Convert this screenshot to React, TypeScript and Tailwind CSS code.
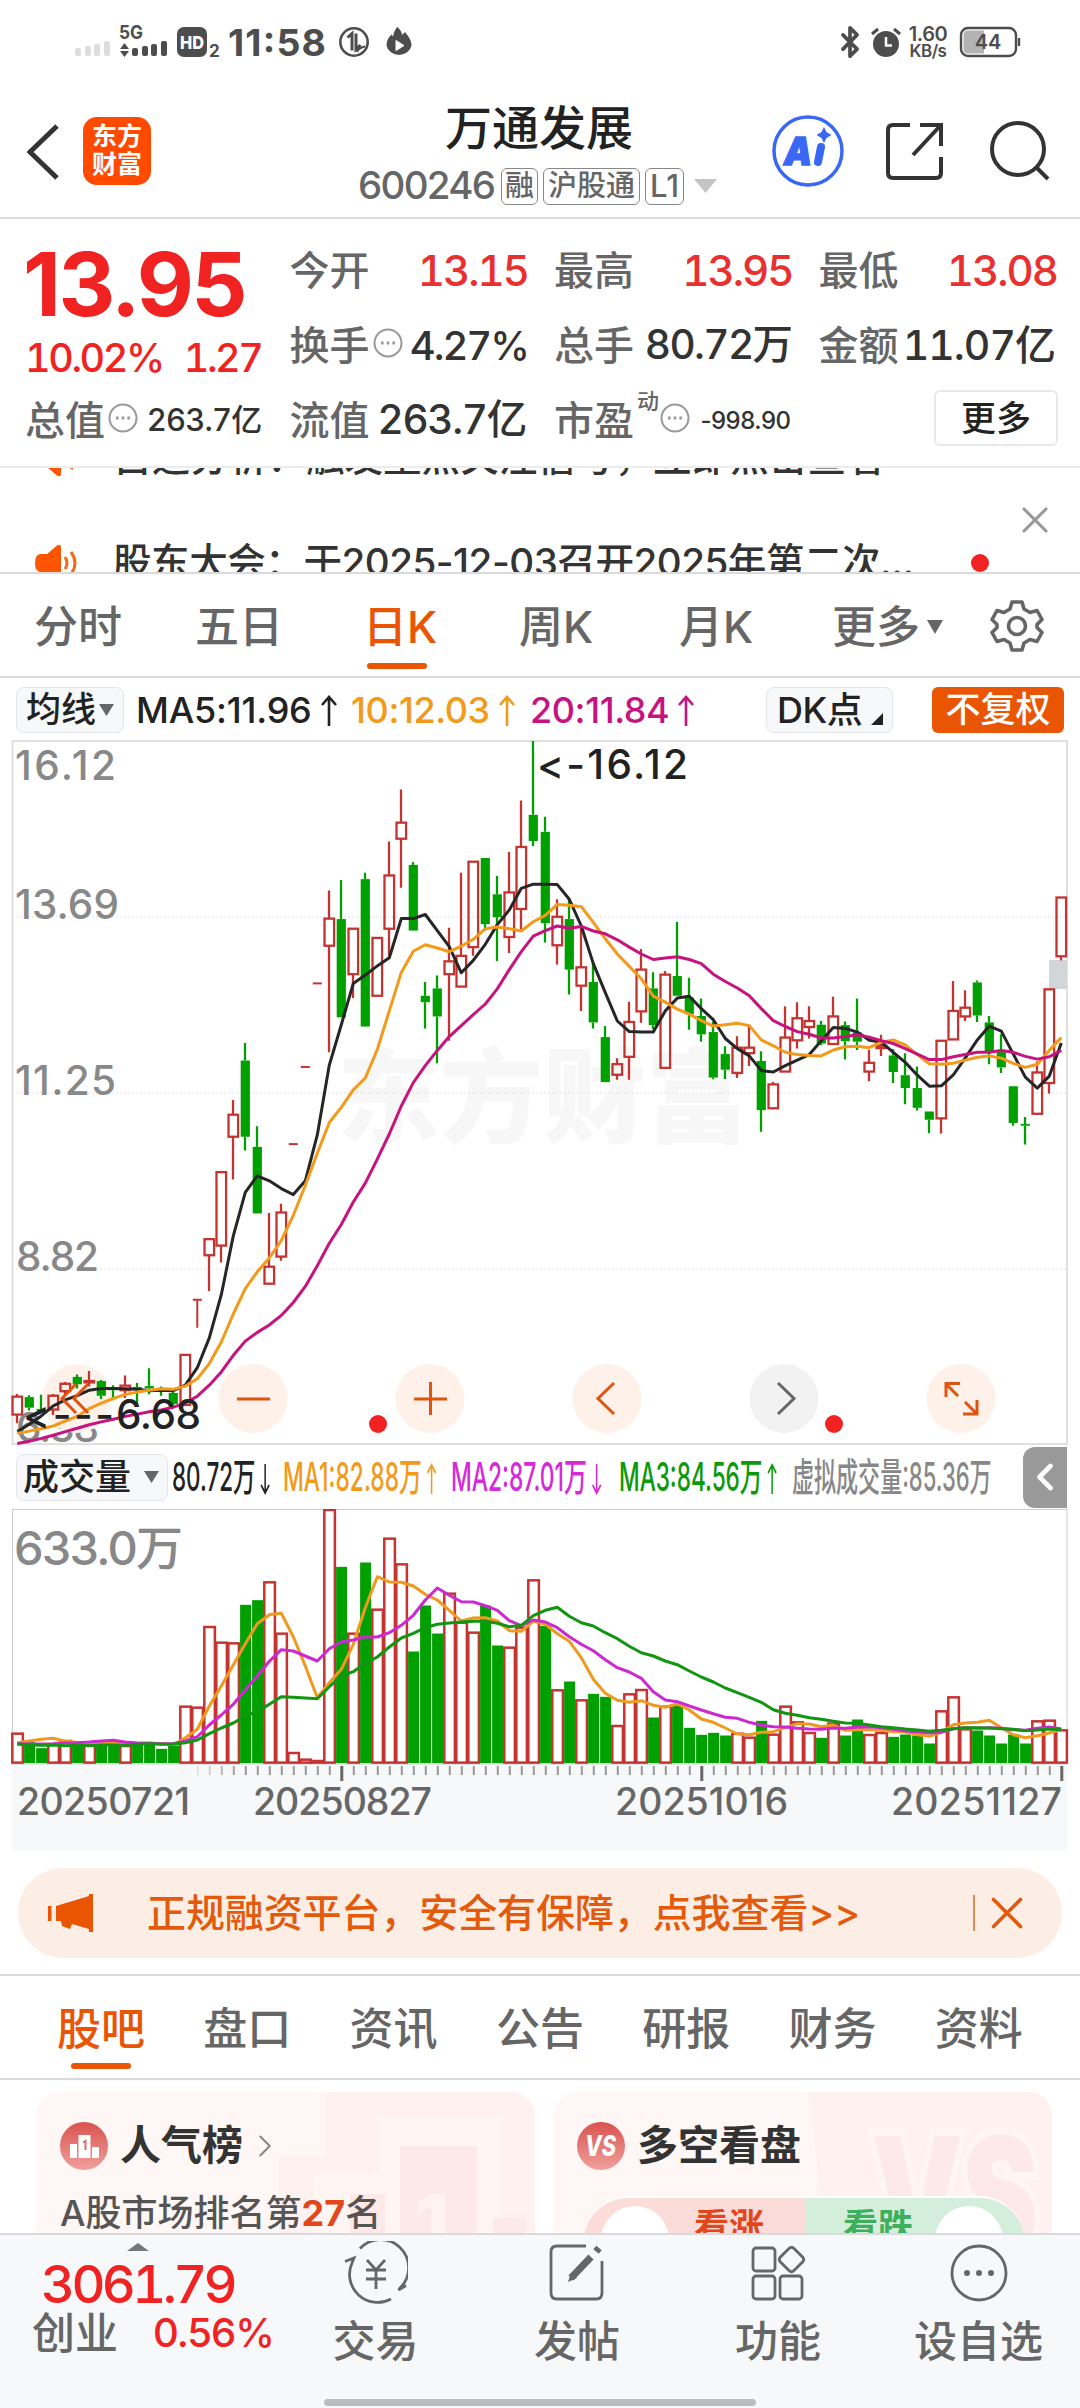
import React from 'react';
import { Bluetooth, ChevronLeft, ChevronRight, X } from 'lucide-react';

type Candle = [kind: 'r' | 'g', open: number, close: number, high: number, low: number];

// open/close/high/low in plot units, measured down from the top of the chart
const PRICE_SCALE = 0.4592;
const STEP = 12;

const candles: Candle[] = [
  ['r', 1430, 1469, 1424, 1488], ['g', 1431, 1454, 1427, 1460], ['g', 1457, 1461, 1426, 1462], ['r', 1428, 1458, 1424, 1470],
  ['r', 1402, 1418, 1398, 1425], ['g', 1387, 1403, 1382, 1412], ['r', 1396, 1399, 1374, 1408], ['g', 1396, 1428, 1394, 1435],
  ['g', 1412, 1416, 1405, 1438], ['r', 1406, 1416, 1384, 1433], ['g', 1409, 1414, 1400, 1448], ['g', 1407, 1412, 1368, 1425],
  ['g', 1411, 1415, 1408, 1428], ['g', 1422, 1446, 1420, 1448], ['r', 1339, 1448, 1339, 1448], ['r', 1219, 1219, 1219, 1280],
  ['r', 1087, 1122, 1087, 1200], ['r', 941, 1101, 941, 1138], ['r', 816, 864, 784, 957], ['g', 698, 864, 660, 894],
  ['g', 886, 1031, 841, 1031], ['r', 1147, 1184, 1030, 1184], ['r', 1029, 1125, 1010, 1134], ['r', 880, 880, 880, 880],
  ['r', 712, 712, 712, 712], ['r', 530, 530, 530, 530], ['r', 389, 448, 328, 680], ['g', 390, 604, 305, 604],
  ['r', 411, 510, 411, 562], ['g', 303, 624, 289, 624], ['r', 431, 557, 431, 557], ['r', 295, 411, 221, 470],
  ['r', 180, 215, 108, 322], ['g', 272, 415, 266, 415], ['g', 557, 571, 527, 628], ['g', 541, 602, 513, 704],
  ['r', 482, 510, 409, 655], ['r', 470, 537, 289, 537], ['r', 265, 451, 265, 470], ['g', 257, 401, 257, 415],
  ['g', 336, 386, 296, 481], ['r', 332, 429, 244, 464], ['r', 233, 368, 132, 412], ['g', 163, 220, 2, 231],
  ['g', 200, 399, 167, 441], ['r', 385, 447, 347, 489], ['g', 390, 500, 347, 554], ['r', 495, 535, 405, 590],
  ['g', 527, 615, 484, 628], ['g', 647, 745, 623, 745], ['r', 706, 729, 693, 740], ['r', 614, 690, 570, 740],
  ['r', 500, 591, 455, 616], ['g', 541, 621, 506, 630], ['r', 511, 714, 503, 714], ['g', 514, 557, 396, 557],
  ['g', 561, 597, 518, 631], ['g', 601, 641, 563, 657], ['g', 636, 735, 613, 739], ['g', 684, 718, 667, 738],
  ['r', 670, 725, 645, 736], ['r', 670, 682, 620, 710], ['g', 699, 806, 678, 853], ['r', 750, 802, 745, 804],
  ['r', 648, 722, 580, 722], ['r', 606, 654, 571, 672], ['r', 612, 625, 580, 650], ['g', 620, 661, 612, 664],
  ['r', 602, 662, 559, 662], ['g', 621, 656, 613, 696], ['g', 637, 657, 563, 675], ['r', 703, 722, 675, 743],
  ['r', 666, 671, 642, 688], ['g', 687, 723, 673, 747], ['g', 730, 758, 682, 793], ['g', 758, 801, 711, 807],
  ['g', 809, 827, 809, 856], ['r', 655, 824, 655, 857], ['r', 590, 652, 525, 652], ['r', 583, 602, 545, 612],
  ['g', 528, 600, 524, 614], ['g', 615, 678, 601, 706], ['g', 676, 713, 641, 725], ['g', 754, 834, 754, 840],
  ['g', 836, 840, 821, 881], ['r', 724, 814, 700, 816], ['r', 543, 747, 543, 770], ['r', 343, 471, 343, 480],
];

const ma5 = [
  1506, 1490, 1472, 1450, 1437, 1428, 1416, 1412, 1412, 1413, 1414, 1417, 1416, 1417, 1405, 1367, 1302, 1208, 1080, 985, 949, 960,
  977, 990, 960, 860, 708, 620, 530, 512, 492, 474, 389, 389, 380, 415, 450, 507, 480, 445, 402, 370, 323, 314, 314, 315, 347, 405,
  487, 550, 612, 635, 636, 636, 590, 562, 558, 585, 609, 650, 672, 688, 720, 723, 709, 697, 685, 655, 626, 628, 636, 654, 658, 680,
  702, 730, 754, 753, 729, 692, 653, 623, 634, 684, 734, 758, 732, 660,
];
const ma10 = [
  1510, 1505, 1500, 1494, 1483, 1473, 1456, 1444, 1434, 1425, 1420, 1416, 1413, 1414, 1407, 1391, 1358, 1311, 1250, 1195, 1158, 1128,
  1090, 1035, 970, 900, 833, 800, 762, 736, 674, 590, 506, 460, 446, 453, 461, 449, 434, 411, 407, 411, 416, 396, 382, 358, 360, 363,
  397, 433, 466, 493, 520, 558, 571, 586, 597, 611, 623, 620, 617, 622, 653, 666, 680, 685, 687, 688, 675, 668, 667, 670, 658, 653,
  664, 685, 705, 706, 704, 697, 691, 688, 693, 704, 713, 706, 676, 648,
];
const ma20 = [
  1532, 1527, 1521, 1514, 1506, 1499, 1491, 1485, 1479, 1473, 1468, 1463, 1459, 1453, 1444, 1429, 1405, 1376, 1340, 1309, 1290, 1274,
  1253, 1225, 1190, 1145, 1096, 1055, 1006, 965, 913, 858, 797, 746, 709, 676, 646, 622, 598, 575, 542, 500, 461, 427, 415, 405, 410,
  406, 416, 422, 435, 451, 466, 478, 475, 472, 478, 487, 510, 526, 540, 557, 585, 611, 624, 635, 641, 649, 649, 646, 642, 647, 655,
  661, 672, 684, 696, 696, 690, 685, 680, 680, 676, 680, 689, 695, 690, 676,
];

// same order as the candles, one third of a pixel per unit
const volumes = [
  878, 905, 923, 910, 900, 908, 912, 910, 912, 915, 907, 905, 925, 915, 797, 800, 558, 605, 607, 493, 479, 424, 578, 936, 956, 960,
  190, 379, 578, 366, 506, 293, 370, 633, 495, 579, 458, 545, 575, 495, 615, 620, 560, 418, 556, 748, 723, 778, 760, 769, 855, 760,
  747, 831, 797, 794, 862, 883, 877, 885, 878, 890, 841, 881, 797, 844, 876, 892, 848, 885, 837, 882, 876, 889, 882, 885, 909, 811,
  769, 865, 870, 885, 909, 882, 909, 841, 839, 868,
];
const volMa1 = [
  905, 900, 895, 892, 901, 904, 906, 907, 905, 907, 907, 906, 908, 911, 890, 865, 795, 735, 672, 608, 548, 521, 517, 587, 675, 770,
  725, 685, 610, 500, 407, 423, 424, 435, 460, 477, 508, 540, 531, 530, 540, 569, 571, 541, 550, 578, 601, 650, 715, 757, 778, 784,
  779, 793, 799, 789, 807, 834, 844, 861, 879, 881, 874, 872, 860, 848, 849, 857, 852, 868, 866, 866, 868, 872, 873, 881, 886, 874,
  851, 846, 844, 838, 860, 881, 890, 884, 876, 865,
];
const volMa2 = [
  908, 909, 909, 908, 906, 905, 903, 900, 898, 903, 906, 907, 908, 908, 900, 887, 852, 822, 790, 747, 705, 661, 626, 630, 645, 660,
  623, 603, 597, 587, 588, 575, 553, 523, 477, 441, 463, 482, 483, 494, 508, 539, 554, 537, 543, 560, 587, 610, 629, 656, 680, 693,
  712, 752, 777, 782, 795, 807, 818, 829, 832, 844, 853, 857, 858, 862, 864, 865, 861, 862, 858, 857, 860, 865, 870, 873, 876, 874,
  863, 860, 862, 860, 862, 866, 868, 862, 858, 864,
];
const volMa3 = [
  909, 912, 913, 912, 914, 913, 914, 912, 912, 913, 910, 908, 910, 909, 905, 897, 878, 861, 846, 825, 812, 790, 767, 769, 771, 773,
  737, 705, 692, 667, 648, 618, 591, 577, 560, 550, 546, 543, 541, 541, 547, 557, 553, 524, 508, 499, 526, 545, 555, 575, 593, 616,
  635, 645, 660, 671, 690, 708, 723, 741, 755, 769, 784, 806, 817, 823, 830, 835, 841, 846, 847, 852, 857, 860, 864, 867, 871, 868,
  863, 860, 860, 861, 863, 865, 869, 867, 864, 866,
];

const RED = '#c43431';
const GREEN = '#00a000';

const xAt = (i: number) => 17.3 + i * STEP;
const priceLine = (values: number[]) => values.map((v, i) => `${xAt(i)},${(v * PRICE_SCALE).toFixed(1)}`).join(' ');
const volLine = (values: number[]) => values.map((v, i) => `${xAt(i)},${((v - 204) / 3).toFixed(1)}`).join(' ');

const isRedVolume = (i: number) => candles[i][0] === 'r' || i === 43;

const PriceChart: React.FC = () => (
  <svg width="1080" height="705" viewBox="0 0 1080 705" className="block">
    <text x="337" y="395" fontSize="103" fontWeight="900" fill="#f7f7f7">东方财富</text>
    {[177, 353, 529].map((y) => (
      <line key={y} x1="12" x2="1067" y1={y} y2={y} stroke="#e0e0e0" strokeWidth="1" strokeDasharray="2 2" />
    ))}
    <rect x="12.5" y="1" width="1054.5" height="703" fill="none" stroke="#e0e0e0" strokeWidth="2" />
    <g fontSize="40.5" fill="#888" fontWeight="500">
      <text x="15" y="40" textLength="101">16.12</text>
      <text x="15" y="179" textLength="104">13.69</text>
      <text x="15" y="355" textLength="101">11.25</text>
      <text x="16" y="531" textLength="83">8.82</text>
      <text x="16" y="702" textLength="83">6.38</text>
    </g>
    <g fill="#fef1e9">
      <circle cx="77" cy="658.5" r="34.5" />
      <circle cx="253" cy="658.5" r="34.5" />
      <circle cx="430" cy="658.5" r="34.5" />
      <circle cx="607" cy="658.5" r="34.5" />
      <circle cx="784" cy="658.5" r="34.5" fill="#f2f2f2" />
      <circle cx="961" cy="658.5" r="34.5" />
    </g>
    <rect x="1049" y="220" width="18" height="29" fill="#d2d5da" />
    {candles.map(([kind, open, close, high, low], i) => {
      const x = xAt(i);
      const top = open * PRICE_SCALE;
      const h = (close - open) * PRICE_SCALE;
      if (open === close) {
        return <path key={i} d={`M${x - 4.5} ${top}h9M${x} ${top}V${low * PRICE_SCALE}`} stroke={RED} strokeWidth="2" fill="none" />;
      }
      const color = kind === 'r' ? RED : GREEN;
      return (
        <g key={i}>
          <path
            d={`M${x - 0.3} ${high * PRICE_SCALE}V${top}M${x - 0.3} ${top + h}V${low * PRICE_SCALE}`}
            stroke={color}
            strokeWidth="2.3"
          />
          {kind === 'r' ? (
            <rect x={x - 4.8} y={top} width="9.6" height={h} fill="none" stroke={color} strokeWidth="2.3" />
          ) : (
            <rect x={x - 4.6} y={top} width="9.2" height={Math.max(h, 1.5)} fill={color} />
          )}
        </g>
      );
    })}
    <g fill="none" strokeWidth="3" strokeLinejoin="round">
      <polyline points={priceLine(ma5)} stroke="#262626" />
      <polyline points={priceLine(ma10)} stroke="#f39a1a" />
      <polyline points={priceLine(ma20)} stroke="#c7137f" />
    </g>
    <g fontSize="40.5" fill="#222" fontWeight="500" className="[font-feature-settings:'calt'_0]">
      <text x="537" y="39" textLength="151">&lt;-16.12</text>
      <text x="23" y="689" textLength="91">&lt;---</text>
      <text x="116" y="689" textLength="85">6.68</text>
    </g>
    <g fill="none" stroke="#de5410" strokeWidth="3">
      <path d="M76 644L62 658.5L76 673M88 644L74 658.5L88 673" />
      <path d="M237 659H270" />
      <path d="M414 659H447M430.5 642V675" />
      <path d="M614 643L598 658.5L614 674" />
      <path d="M778 643L794 658.5L778 674" stroke="#666" />
      <path d="M946 657V643.5H960M947 645L958 656M977 660V674H963M976 673L965 662" />
    </g>
    <g fill="#f02222">
      <circle cx="378" cy="684" r="9" />
      <circle cx="834" cy="684" r="9" />
    </g>
  </svg>
);

const VolumeChart: React.FC = () => (
  <svg width="1080" height="341" viewBox="0 0 1080 341" className="block">
    <rect x="12" y="255" width="1055" height="86" fill="#f7f8fa" />
    <rect x="12.5" y="0.5" width="1054.5" height="254.5" fill="none" stroke="#ccc" strokeWidth="1" />
    <text x="14" y="55.5" fontSize="47" fontWeight="500" fill="#888" textLength="169">633.0万</text>
    {volumes.map((v, i) => {
      const top = Math.max((v - 204) / 3, 1);
      const x = xAt(i);
      return isRedVolume(i) ? (
        <rect key={i} x={x - 5} y={top} width="10.6" height={Math.max(253.6 - top, 1)} fill="#fff" stroke={RED} strokeWidth="2.5" />
      ) : (
        <rect key={i} x={x - 5.2} y={top - 0.5} width="11" height={254.5 - top} fill={GREEN} />
      );
    })}
    <g fill="none" strokeWidth="3" strokeLinejoin="round">
      <polyline points={volLine(volMa1)} stroke="#ef9a1f" />
      <polyline points={volLine(volMa2)} stroke="#cc2ad0" />
      <polyline points={volLine(volMa3)} stroke="#129612" />
    </g>
    {Array.from({ length: 73 }, (_, n) => n + 15).map((i) => {
      const major = i === 27 || i === 57 || i === 87;
      return (
        <line
          key={i}
          x1={xAt(i) + 0.5}
          x2={xAt(i) + 0.5}
          y1="257"
          y2={major ? 272 : 266}
          stroke={major ? '#666' : '#999'}
          strokeWidth={major ? 3 : 2}
          opacity={i < 19 ? (i - 14) * 0.22 : 1}
        />
      );
    })}
    <g fontSize="37.5" fill="#666" fontWeight="500">
      <text x="17" y="306" textLength="173">20250721</text>
      <text x="253" y="306" textLength="179">20250827</text>
      <text x="615" y="306" textLength="173">20251016</text>
      <text x="891" y="306" textLength="171">20251127</text>
    </g>
  </svg>
);

const Dots: React.FC = () => (
  <svg width="30" height="30" viewBox="0 0 30 30" fill="none" stroke="#999" strokeWidth="2" className="shrink-0">
    <circle cx="15" cy="15" r="13.5" />
    <path d="M8 15h2.6M13.7 15h2.6M19.4 15h2.6" strokeWidth="3" />
  </svg>
);

const StatusBar: React.FC = () => (
  <div className="h-[90px] flex items-start pt-[24px] text-[#4d4d4d]">
    <svg width="348" height="36" viewBox="0 0 348 36" className="ml-[72px] overflow-visible">
      <g fill="#ddd">
        <rect x="3" y="24" width="6" height="8" rx="2" />
        <rect x="13" y="22" width="6" height="10" rx="2" />
        <rect x="22" y="20" width="6" height="12" rx="2" />
        <rect x="32" y="17" width="6" height="15" rx="2" />
      </g>
      <text x="47" y="15" fontSize="19" fontWeight="700" fill="#4d4d4d" textLength="24" lengthAdjust="spacingAndGlyphs">5G</text>
      <g fill="#4d4d4d">
        <path d="M48 25l4.500-6 4.500 6zM48 27l4.500 6 4.500-6z" />
        <rect x="60" y="24" width="6" height="8" rx="2" />
        <rect x="70" y="22" width="6" height="10" rx="2" />
        <rect x="79" y="20" width="6" height="12" rx="2" />
        <rect x="89" y="17" width="6" height="15" rx="2" />
        <rect x="105" y="3" width="30" height="30" rx="7" />
      </g>
      <text x="108" y="24.5" fontSize="18" fontWeight="800" fill="#fff" textLength="24" lengthAdjust="spacingAndGlyphs">HD</text>
      <text x="137" y="32.5" fontSize="17" fontWeight="700" fill="#4d4d4d">2</text>
      <text x="156" y="32" fontSize="37.5" fontWeight="700" fill="#4d4d4d" textLength="98">11:58</text>
      <g fill="none" stroke="#4d4d4d" strokeWidth="2.6">
        <circle cx="282" cy="18" r="13.7" />
        <path d="M275.5 13.5l4.500-4v17M284 9.500v16l4.500-4.500" strokeWidth="3" />
        <path d="M285 28q2-4.500 8-5.500" strokeWidth="2" />
      </g>
      <path
        d="M325 3c4 3 5 6 5 8l3-3c3 4 6.500 8 6.500 13.500a12.700 11.500 0 0 1-25 0c0-5 2-8 5-11l1.500 2c1-4 1.500-6 4-9.500z"
        fill="#4d4d4d"
      />
      <path d="M324 16.500l8 5-8 5z" fill="#fff" stroke="#fff" strokeLinejoin="round" />
    </svg>
    <div className="ml-auto mr-[59px] flex items-center h-[36px]">
      <Bluetooth size={34} strokeWidth={2.6} className="mr-[2px]" />
      <svg width="34" height="34" viewBox="0 0 34 34">
        <circle cx="17" cy="19" r="13" fill="#4d4d4d" />
        <path d="M3 9l6-5M31 9l-6-5" stroke="#4d4d4d" strokeWidth="3" />
        <path d="M17 12v8.500h6" stroke="#fff" strokeWidth="2.5" fill="none" />
      </svg>
      <div className="w-[44px] ml-[3px] text-center text-[20px] leading-[18px] font-semibold tracking-[-0.500px]">
        1.60
        <div className="text-[17px] leading-[17px]">KB/s</div>
      </div>
      <svg width="62" height="32" viewBox="0 0 62 32" className="ml-[9px]">
        <rect x="2" y="2" width="55" height="28" rx="7" fill="#fff" stroke="#4d4d4d" strokeWidth="2.4" />
        <path d="M9 4.500h16v23H9q-4.500 0-4.500-4.500V9q0-4.500 4.500-4.500z" fill="#b3b3b3" />
        <path d="M60 12v8" stroke="#4d4d4d" strokeWidth="2.4" />
        <text x="29" y="23" fontSize="20" fontWeight="600" textAnchor="middle" fill="#4d4d4d">44</text>
      </svg>
    </div>
  </div>
);

const Header: React.FC = () => (
  <header className="h-[129px] flex items-start border-b-2 border-[#dcdcdc]">
    <svg width="32" height="56" viewBox="0 0 32 56" className="ml-[27px] mt-[34px]">
      <path d="M30 2L3 28L30 54" fill="none" stroke="#333" strokeWidth="5" />
    </svg>
    <div className="ml-[24px] mt-[27px] w-[68px] h-[68px] rounded-[14px] bg-[#ff4a00] text-white text-[25px] leading-[28px] font-bold text-center pt-[5px]">
      东方
      <br />
      财富
    </div>
    <div className="w-[400px] ml-[188px] mt-[10px] flex flex-col items-center">
      <div className="text-[47px] leading-[56px] font-medium text-[#222]">万通发展</div>
      <div className="h-[38px] mt-[11px] flex items-center gap-[5px] text-[32px] text-[#666] ml-[-2px]">
        <span className="text-[38.500px] tracking-[-1.700px] w-[138px]">600246</span>
        <span className="h-[37px] flex items-center border border-[#888] rounded-[6px] px-[3px] text-[29px]">融</span>
        <span className="h-[37px] flex items-center border border-[#888] rounded-[6px] px-[4px] text-[29px]">沪股通</span>
        <span className="h-[37px] flex items-center border border-[#888] rounded-[6px] px-[4px] text-[31px]">L1</span>
        <svg width="24" height="16" className="ml-[5px]"><path d="M0 1h23L11.500 15z" fill="#c4c4c4" /></svg>
      </div>
    </div>
    <svg width="74" height="74" viewBox="0 0 74 74" className="ml-[32px] mt-[24px]">
      <circle cx="37" cy="37" r="34" fill="none" stroke="#3a68f5" strokeWidth="3.5" />
      <text x="13" y="51" fontSize="39" fontWeight="900" fontStyle="italic" fill="#3a68f5" stroke="#3a68f5" strokeWidth="1.5" textLength="28" lengthAdjust="spacingAndGlyphs">A</text>
      <path d="M50 33l-3 15" stroke="#3a68f5" strokeWidth="8" strokeLinecap="round" />
      <path d="M53 13l2.500 5 5 3-5 3-2.500 5-2.500-5-5-3 5-3z" fill="#3a68f5" />
    </svg>
    <svg width="62" height="62" viewBox="0 0 62 62" className="ml-[39px] mt-[30px] shrink-0" fill="none" stroke="#333" strokeWidth="4">
      <path d="M26 5H9q-5 0-5 5V53q0 5 5 5H52q5 0 5-5V37M36 5H57V26M56 6L29 35" />
    </svg>
    <svg width="62" height="62" viewBox="0 0 62 62" className="ml-[42px] mt-[30px] shrink-0" fill="none" stroke="#333" strokeWidth="4">
      <circle cx="30" cy="29" r="26" />
      <path d="M48 47L60 59" />
    </svg>
  </header>
);

interface StatProps {
  label: string;
  value: string;
  red?: boolean;
  dots?: boolean;
  size?: string;
}

const Stat: React.FC<StatProps> = ({ label, value, red, dots, size = 'text-[41px] tracking-[-1px]' }) => (
  <div className="flex items-center justify-between h-[75px] whitespace-nowrap">
    <span className="flex items-center gap-[3px] text-[40px] text-[#666]">
      {label}
      {dots && <span className="pb-[6px]"><Dots /></span>}
    </span>
    <span className={`tabular-nums ${size} ${red ? 'text-[#e93030]' : 'text-[#333]'}`}>{value}</span>
  </div>
);

const Quote: React.FC = () => (
  <section className="h-[249px] pt-[14px] px-[25px] grid grid-cols-4 gap-x-[28px] content-start border-b-2 border-[#ececec]">
    <div className="row-span-2 text-[#f02222] whitespace-nowrap">
      <div className="h-[102px] flex items-center text-[88px] font-bold tracking-[-2.500px] ml-[-2px]">13.95</div>
      <div className="h-[48px] flex items-center justify-between text-[39.500px] tracking-[-2.400px] tabular-nums">
        <span>10.02%</span>
        <span>1.27</span>
      </div>
    </div>
    <Stat label="今开" value="13.15" red size="text-[42px] tracking-[-2px] mr-[-2px]" />
    <Stat label="最高" value="13.95" red size="text-[42px] tracking-[-2px] mr-[-2px]" />
    <Stat label="最低" value="13.08" red size="text-[42px] tracking-[-2px] mr-[-2px]" />
    <Stat label="换手" value="4.27%" dots size="text-[40px] tracking-[-2px] mr-[-2px]" />
    <Stat label="总手" value="80.72万" size="text-[40.500px] tracking-[-1.600px] mr-[-1px]" />
    <Stat label="金额" value="11.07亿" />
    <Stat label="总值" value="263.7亿" dots size="text-[31px] tracking-[-0.800px]" />
    <Stat label="流值" value="263.7亿" size="text-[40.500px] tracking-[-1.300px]" />
    <div className="flex items-center h-[75px] text-[40px] text-[#666] whitespace-nowrap">
      市盈
      <span className="text-[22px] self-start leading-[22px] pt-[7px] ml-[3px]">动</span>
      <span className="pb-[5px] ml-px"><Dots /></span>
      <span className="ml-auto text-[24px] tracking-[-0.500px] text-[#333]">-998.90</span>
    </div>
    <div className="flex justify-end pt-[7px] mr-[-3px]">
      <button className="w-[124px] h-[56px] rounded-[6px] border-2 border-[#e8e8e8] text-[35px] leading-[48px] text-[#222]">更多</button>
    </div>
  </section>
);

const Speaker: React.FC = () => (
  <svg width="46" height="38" viewBox="0 0 46 38" className="shrink-0">
    <path d="M6 10h7L23 1.500q4-2 4 2v31q0 4-4 2L13 28H6q-5-1-5-9t5-9z" fill="#ff5500" />
    <path d="M31 13q4 6 0 12M37 8q8 11 0 22" fill="none" stroke="#f26a20" strokeWidth="3" />
  </svg>
);

const News: React.FC = () => (
  <section className="h-[106px] overflow-hidden relative text-[38.600px] text-[#333] border-b-2 border-[#dadada]">
    <div className="mt-[-34px] h-[48px] flex items-center pl-[34px] gap-[33px] whitespace-nowrap">
      <Speaker />
      <span>自选分析：触发重点关注信号，立即点击查看</span>
    </div>
    <div className="mt-[57px] h-[48px] flex items-center pl-[34px] gap-[33px] whitespace-nowrap">
      <Speaker />
      <span className="w-[835px] tracking-[-0.500px]">股东大会：于2025-12-03召开2025年第二次...</span>
      <span className="w-[18px] h-[18px] rounded-full bg-[#f02222] ml-[-10px]" />
    </div>
    <X size={44} strokeWidth={1.7} className="absolute right-[23px] top-[30px] text-[#999]" />
  </section>
);

const PeriodTabs: React.FC = () => (
  <nav className="h-[104px] pt-[3px] pl-[34px] flex items-center text-[44px] text-[#666] border-b-2 border-[#dadada] whitespace-nowrap">
    <span className="w-[161px]">分时</span>
    <span className="w-[168px]">五日</span>
    <span className="w-[156px] relative text-[#ea5504]">
      日K
      <span className="absolute left-[4px] top-[69px] w-[60px] h-[6px] rounded-[3px] bg-[#ea5504]" />
    </span>
    <span className="w-[160px]">周K</span>
    <span className="w-[153px]">月K</span>
    <span>更多</span>
    <svg width="16" height="14" className="ml-[7px]"><path d="M0 0h16L8 14z" fill="#666" /></svg>
    <svg width="54" height="54" viewBox="0 0 54 54" className="ml-[47px] mt-[-2px]" fill="none" stroke="#666" strokeWidth="3.6" strokeLinejoin="round">
      <path d="M22 3h10l2 7 6 3.500 7-2 5 9-5 5v3l5 5-5 9-7-2-6 3.500-2 7H22l-2-7-6-3.500-7 2-5-9 5-5v-3l-5-5 5-9 7 2 6-3.500z" />
      <circle cx="27" cy="27" r="8.5" />
    </svg>
  </nav>
);

const Arrow: React.FC<{ down?: boolean }> = ({ down }) => (
  <svg width="18" height="32" viewBox="0 0 18 32" className="inline-block ml-[8px] align-[-4px]" fill="none" stroke="currentColor" strokeWidth="2.6">
    <path d={down ? 'M9 1V30M2 22L9 30L16 22' : 'M9 31V2M2 10L9 2L16 10'} />
  </svg>
);

const MaBar: React.FC = () => (
  <div className="h-[63px] pl-[16px] flex items-center text-[36px] whitespace-nowrap text-[#222]">
    <span className="w-[108px] h-[46px] flex items-center rounded-[8px] border border-[#e3e5ea] bg-[#f7f8fa] pl-[9px] text-[35px]">
      均线
      <svg width="15" height="12" className="ml-[3px]"><path d="M0 0h15L7.500 12z" fill="#666" /></svg>
    </span>
    <span className="w-[215px] ml-[12px] tracking-[-0.200px]">MA5:11.96<Arrow /></span>
    <span className="w-[179px] tracking-[-0.400px] text-[#f39a1a]">10:12.03<Arrow /></span>
    <span className="w-[236px] tracking-[-0.400px] text-[#c7137f]">20:11.84<Arrow /></span>
    <span className="w-[127px] h-[46px] flex items-center rounded-[8px] border border-[#e3e5ea] bg-[#f7f8fa] pl-[10px] text-[36px] tracking-[-0.500px]">
      DK点
      <svg width="12" height="12" className="ml-[9px] mt-[18px]"><path d="M12 0v12H0z" fill="#222" /></svg>
    </span>
    <span className="ml-[39px] w-[132px] h-[46px] flex items-center justify-center rounded-[6px] bg-[#ea5504] text-white text-[35px]">
      不复权
    </span>
  </div>
);

const VolumeBar: React.FC = () => (
  <div className="h-[64px] pl-[16px] flex items-center whitespace-nowrap text-[#222]">
    <span className="w-[152px] h-[47px] flex items-center rounded-[8px] border border-[#e3e5ea] bg-[#f7f8fa] pl-[6px] text-[36px]">
      成交量
      <svg width="15" height="12" className="ml-[13px]"><path d="M0 0h15L7.500 12z" fill="#666" /></svg>
    </span>
    <span className="w-[111px] ml-[4px] text-[39px]">
      <span className="inline-block origin-left scale-x-[0.575]">80.72万<Arrow down /></span>
    </span>
    <span className="w-[168px] text-[39px] text-[#f39a1a]">
      <span className="inline-block origin-left scale-x-[0.585]">MA1:82.88万<Arrow /></span>
    </span>
    <span className="w-[168px] text-[39px] text-[#d62ad8]">
      <span className="inline-block origin-left scale-x-[0.585]">MA2:87.01万<Arrow down /></span>
    </span>
    <span className="w-[173px] text-[39px] text-[#0a9a0a]">
      <span className="inline-block origin-left scale-x-[0.58]">MA3:84.56万<Arrow /></span>
    </span>
    <span className="w-[231px] text-[39px] text-[#888]">
      <span className="inline-block origin-left scale-x-[0.565]">虚拟成交量:85.36万</span>
    </span>
    <span className="w-[44px] h-[61px] shrink-0 flex items-center justify-center rounded-l-[12px] bg-[#999] text-white">
      <ChevronLeft size={44} strokeWidth={2.6} className="shrink-0" />
    </span>
  </div>
);

const Banner: React.FC = () => (
  <div className="pt-[18px] h-[126px] border-b-2 border-[#dadada]">
    <div className="mx-[18px] h-[90px] rounded-full bg-[#fceee5] flex items-center pl-[30px] text-[39px] text-[#e35a0c] whitespace-nowrap">
      <svg width="46" height="40" viewBox="0 0 46 40" fill="#ea5504">
        <path d="M0 13h3.500v15H0zM8 13L41 3V1h4v38h-4v-3L24 31l-2 5-8-3-1-5H8z" />
      </svg>
      <span className="ml-[53px] w-[826px] tracking-[-0.100px]">正规融资平台，安全有保障，点我查看&gt;&gt;</span>
      <span className="w-[2px] h-[36px] bg-[#e08a55]" />
      <X size={54} strokeWidth={1.6} className="ml-[5px]" />
    </div>
  </div>
);

const infoTabs = ['股吧', '盘口', '资讯', '公告', '研报', '财务', '资料'];

const InfoTabs: React.FC = () => (
  <nav className="h-[104px] pt-[4px] pl-[57px] flex items-center text-[44px] text-[#666] border-b-2 border-[#dadada] whitespace-nowrap">
    {infoTabs.map((tab, i) => (
      <span key={tab} className={`w-[146.300px] shrink-0 relative ${i === 0 ? 'text-[#ea5504]' : ''}`}>
        {tab}
        {i === 0 && <span className="absolute left-[14px] top-[67px] w-[60px] h-[6px] rounded-[3px] bg-[#ea5504]" />}
      </span>
    ))}
  </nav>
);

const Cards: React.FC = () => (
  <section className="h-[153px] overflow-hidden pt-[12px] pl-[36px] flex gap-[19px]">
    <div className="w-[499px] h-[200px] shrink-0 rounded-[24px] bg-[#fff7f5] relative overflow-hidden">
      <svg width="499" height="200" viewBox="0 0 499 200" className="absolute inset-0">
        <path d="M243 64h47v136h-47zM290 0h209v200H290z" fill="#fef1ef" />
        <path d="M277 82h65V25h124v115h33v60H277z" fill="#fff5f3" />
        <path d="M364 54h77v146h-77zM314 102h35v98h-35zM457 126h33v74h-33z" fill="#fde9e7" />
        <text x="378" y="160" fontSize="80" fontWeight="800" fill="#fff3f1">1</text>
      </svg>
      <div className="relative pl-[24px] pt-[30px]">
        <div className="flex items-center h-[48px] text-[41px] font-bold text-[#333]">
          <svg width="48" height="48" viewBox="0 0 48 48" className="mr-[12px]">
            <defs>
              <linearGradient id="badge" x1="0" y1="0" x2="0" y2="1">
                <stop offset="0" stopColor="#d9534f" />
                <stop offset="1" stopColor="#f0a09c" />
              </linearGradient>
            </defs>
            <circle cx="24" cy="24" r="24" fill="url(#badge)" />
            <path d="M10 22h7v14h-7zM18.500 13h12v23h-12zM32 25h7v11h-7z" fill="#fff" />
            <path d="M23 20.500l2.500-1.500v9" stroke="#de6a66" strokeWidth="2" fill="none" />
          </svg>
          人气榜
          <ChevronRight size={38} strokeWidth={1.3} className="ml-[3px] text-[#888]" />
        </div>
        <div className="mt-[18px] text-[36px] leading-[50px] text-[#555]">
          A股市场排名第<b className="text-[#e0481c]">27</b>名
        </div>
      </div>
    </div>
    <div className="w-[498px] h-[200px] shrink-0 rounded-[24px] bg-[#fff7f5] relative overflow-hidden">
      <svg width="498" height="200" viewBox="0 0 498 200" className="absolute inset-0">
        <path d="M256 0h242v200H275z" fill="#fef1ef" />
        <text
          x="318"
          y="160"
          fontSize="160"
          fontWeight="900"
          fill="#fde9e7"
          stroke="#fff5f3"
          strokeWidth="16"
          paintOrder="stroke"
          textLength="166"
          lengthAdjust="spacingAndGlyphs"
        >
          VS
        </text>
      </svg>
      <div className="relative pl-[23px] pt-[30px]">
        <div className="flex items-center h-[48px] text-[41px] font-bold text-[#333]">
          <svg width="48" height="48" viewBox="0 0 48 48" className="mr-[12px]">
            <circle cx="24" cy="24" r="24" fill="url(#badge)" />
            <text x="8" y="34" fontSize="28" fontWeight="800" fontStyle="italic" fill="#fff" textLength="31" lengthAdjust="spacingAndGlyphs">VS</text>
          </svg>
          多空看盘
        </div>
        <div className="ml-[7px] mt-[26px] w-[440px] h-[90px] rounded-[45px] overflow-hidden flex text-[35px] leading-[44px] font-bold border-t-2 border-white">
          <div className="w-[221px] bg-[#fcdcd9] text-[#e0481c] pl-[17px] flex items-start">
            <span className="w-[68px] h-[68px] rounded-full bg-white mr-[25px] mt-[8px] shrink-0" />
            <span className="pt-[6px]">看涨</span>
          </div>
          <div className="w-[219px] bg-[#d4eedc] text-[#3eb05c] pl-[38px] flex items-start">
            <span className="pt-[6px]">看跌</span>
            <span className="w-[68px] h-[68px] rounded-full bg-white ml-[22px] mt-[8px] shrink-0" />
          </div>
        </div>
      </div>
    </div>
  </section>
);

const navItems = [
  {
    label: '交易',
    width: 'w-[201px]',
    icon: (
      <>
        <path d="M16 7.500A28 28 0 0 1 57 46L54.500 49L62 44.500" />
        <path d="M47 58A28 28 0 0 1 8 22L10 17L1 20.500" />
        <path d="M23 19l9 10 9-10M22 29h20M22 38h20M32 29v19" />
      </>
    ),
  },
  {
    label: '发帖',
    width: 'w-[202px]',
    icon: (
      <>
        <path d="M41 5H12q-6 0-6 6V52q0 6 6 6H51q6 0 6-6V20" />
        <path d="M26 37L46 16M51 10.500L54 7" strokeWidth="7" />
        <path d="M23 41l3-9 6 5z" fill="currentColor" stroke="none" />
      </>
    ),
  },
  {
    label: '功能',
    width: 'w-[200px]',
    icon: (
      <>
        <rect x="7" y="7" width="22" height="23" rx="3" />
        <rect x="7" y="35" width="22" height="23" rx="3" />
        <rect x="34" y="35" width="22" height="23" rx="3" />
        <path d="M43 7.500q2.500-2.500 5 0L57 16.500q1.500 2 0 4L48 29.500q-2.500 2.500-5 0L34 20.500q-1.500-2 0-4z" />
      </>
    ),
  },
  {
    label: '设自选',
    width: 'w-[201px]',
    icon: (
      <>
        <circle cx="32" cy="32" r="27" />
        <path d="M20 32h0M32 32h0M44 32h0" strokeWidth="6" strokeLinecap="round" />
      </>
    ),
  },
];

const BottomNav: React.FC = () => (
  <footer className="h-[176px] bg-[#f7f8fa] border-t-2 border-[#d8dade] text-[#666] flex flex-col items-center">
    <div className="w-full h-[162px] flex whitespace-nowrap">
      <div className="w-[275px] flex flex-col items-center">
        <svg width="22" height="8" className="mt-[8px]"><path d="M0 8h22L11 0z" fill="#777" /></svg>
        <div className="text-[52.500px] leading-[66px] tracking-[-3.600px] tabular-nums text-[#f02222]">3061.79</div>
        <div className="w-full pl-[32px] pr-px flex items-center justify-between text-[43px] leading-[50px] mt-[-9px]">
          创业<span className="text-[40px] tracking-[-1px] text-[#f02222]">0.56%</span>
        </div>
      </div>
      {navItems.map((item) => (
        <button key={item.label} className={`${item.width} flex flex-col items-center`}>
          <svg width="64" height="64" viewBox="0 0 64 64" className="mt-[6px]" fill="none" stroke="currentColor" strokeWidth="2.8">
            {item.icon}
          </svg>
          <span className="text-[43px] leading-[50px] mt-[11px]">{item.label}</span>
        </button>
      ))}
    </div>
    <div className="w-[432px] h-[7px] mt-[2px] rounded-full bg-[#bbb]" />
  </footer>
);

export default function App() {
  return (
    <div className="w-[1080px] h-[2408px] overflow-hidden bg-white font-medium font-['Inter','Noto_Sans_CJK_SC',sans-serif]">
      <StatusBar />
      <Header />
      <Quote />
      <News />
      <PeriodTabs />
      <MaBar />
      <div className="mt-[-1px]"><PriceChart /></div>
      <VolumeBar />
      <VolumeChart />
      <Banner />
      <InfoTabs />
      <Cards />
      <BottomNav />
    </div>
  );
}
